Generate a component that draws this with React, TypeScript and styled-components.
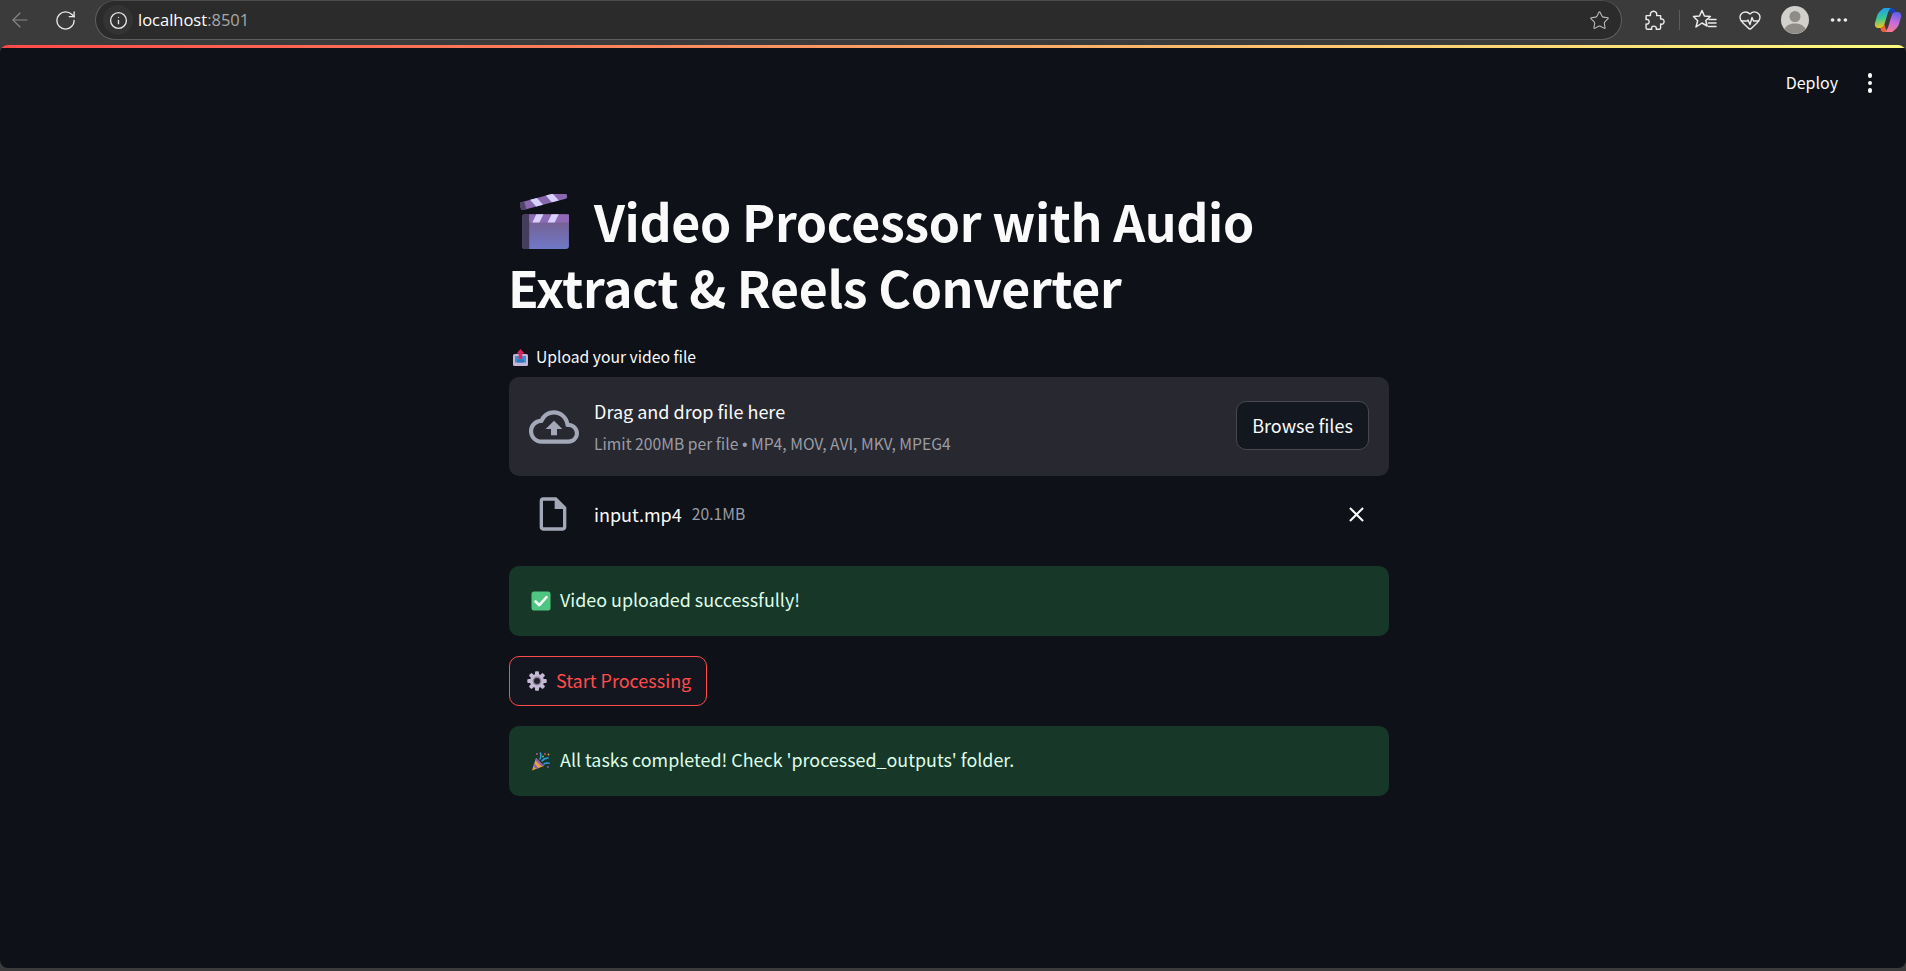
import React from "react";
import styled, { createGlobalStyle } from "styled-components";
import { ArrowLeft, RotateCw, Star, HeartPulse, Ellipsis, Info } from "lucide-react";
import { MdOutlineCloudUpload, MdOutlineInsertDriveFile, MdClose } from "react-icons/md";

const SANS = `"Noto Sans CJK SC", "Noto Sans", sans-serif`;

const GlobalStyle = createGlobalStyle`
  html, body {
    margin: 0;
    padding: 0;
    height: 100%;
    overflow: hidden;
    background: #3b3b3b;
  }
  * {
    box-sizing: border-box;
  }
`;

const Window = styled.div`
  height: 971px;
  display: flex;
  flex-direction: column;
  background: #3b3b3b;
`;

const Toolbar = styled.div`
  height: 45px;
  flex: none;
  display: flex;
  align-items: flex-start;
  color: #e8e8e8;
`;

const ToolSlot = styled.div<{ $w?: number; $dim?: boolean }>`
  width: ${({ $w }) => $w ?? 44}px;
  height: 40px;
  flex: none;
  display: flex;
  align-items: center;
  justify-content: center;
  color: ${({ $dim }) => ($dim ? "#8a8a8a" : "#ececec")};
`;

const CopilotSlot = styled(ToolSlot)`
  margin-left: 5px;
  padding-left: 4px;
`;

const AddressBar = styled.div`
  flex: 1;
  height: 40px;
  margin: 0 10px 0 5px;
  padding: 0 11px 0 7px;
  display: flex;
  align-items: center;
  background: #2b2b2b;
  border: 1.5px solid #5f5f5f;
  border-top-color: #4c4c4c;
  border-radius: 20px;
`;

const SiteInfo = styled.div`
  width: 30px;
  height: 30px;
  border-radius: 50%;
  background: #333333;
  display: flex;
  align-items: center;
  justify-content: center;
  color: #e6e6e6;
`;

const Url = styled.div`
  margin-left: 5px;
  padding-bottom: 2px;
  flex: 1;
  font: 400 16.5px "Open Sans", sans-serif;
  color: #ffffff;
`;

const UrlPort = styled.span`
  color: #a8a8a8;
`;

const ToolDivider = styled.div`
  width: 1px;
  height: 20px;
  margin: 10px 3px 0 3px;
  background: #5c5c5c;
  flex: none;
`;

const Page = styled.main`
  flex: 1;
  margin-bottom: 3px;
  background: #0e1117;
  border-radius: 8px;
  overflow: hidden;
  font-family: ${SANS};
  color: #fafafa;
`;

const Decoration = styled.div`
  height: 3px;
  background: linear-gradient(90deg, rgb(255, 75, 75), rgb(255, 253, 128));
`;

const AppHeader = styled.header`
  height: 70px;
  display: flex;
  align-items: center;
  justify-content: flex-end;
  gap: 26px;
  padding-right: 30px;
`;

const DeployText = styled.span`
  padding-bottom: 2px;
  font-size: 16px;
  line-height: 24px;
  color: #fafafa;
`;

const Kebab = styled.div`
  width: 12px;
  display: flex;
  flex-direction: column;
  align-items: center;
  gap: 3px;
`;

const KebabDot = styled.span`
  width: 4.5px;
  height: 4.5px;
  border-radius: 50%;
  background: #fafafa;
`;

const Column = styled.div`
  width: 880px;
  margin-left: 509px;
  padding-top: 69px;
`;

const Title = styled.h1`
  margin: 0 0 0 -1px;
  font-size: 50px;
  font-weight: 700;
  line-height: 66px;
  letter-spacing: -0.35px;
  color: #fafafa;
`;

const TitleEmoji = styled.svg`
  width: 49px;
  height: 55px;
  margin: 0 25px 0 12px;
  vertical-align: -7px;
`;

const FieldLabel = styled.label`
  margin-top: 26px;
  height: 24px;
  display: flex;
  align-items: center;
  gap: 7px;
  padding-left: 3px;
  font-size: 15.7px;
  line-height: 24px;
  color: #fafafa;
`;

const Dropzone = styled.section`
  margin-top: 8px;
  height: 99px;
  padding: 0 20px;
  display: flex;
  align-items: center;
  background: #282830;
  border-radius: 10px;
`;

const CloudIcon = styled.div`
  width: 50px;
  margin: 0 15px 0 0;
  display: flex;
  justify-content: center;
  color: #a3a8b8;
`;

const DropText = styled.div`
  flex: 1;
  display: flex;
  flex-direction: column;
  gap: 7px;
`;

const DropTitle = styled.div`
  font-size: 18px;
  line-height: 28px;
  color: #fafafa;
`;

const DropHint = styled.div`
  font-size: 15.7px;
  line-height: 24px;
  color: #9a9ca4;
`;

const HintBullet = styled.span`
  font-family: "Liberation Sans", sans-serif;
`;

const BrowseButton = styled.button`
  width: 133px;
  height: 49px;
  margin-bottom: 2px;
  padding-bottom: 3px;
  border-radius: 10px;
  border: 1px solid #474851;
  background: #13171f;
  color: #fafafa;
  font-family: ${SANS};
  font-size: 18px;
`;

const FileRow = styled.div`
  margin-top: 14px;
  height: 50px;
  padding: 0 20px 2px 19px;
  display: flex;
  align-items: center;
`;

const FileIcon = styled.div`
  width: 50px;
  margin-right: 16px;
  display: flex;
  justify-content: center;
  color: #a3a8b8;
`;

const FileName = styled.span`
  font-size: 18px;
  line-height: 28px;
  color: #fafafa;
`;

const FileSize = styled.span`
  margin-left: 10px;
  flex: 1;
  font-size: 15.7px;
  line-height: 28px;
  color: #9a9ca4;
`;

const RemoveIcon = styled.div`
  display: flex;
  color: #fafafa;
`;

const Alert = styled.div<{ $gap: number }>`
  margin-top: ${({ $gap }) => $gap}px;
  height: 70px;
  padding: 0 22px;
  display: flex;
  align-items: center;
  gap: 9px;
  background: #173828;
  border-radius: 10px;
  font-size: 17.9px;
  line-height: 28px;
  color: rgb(223, 253, 233);
`;

const AlertText = styled.span`
  margin-bottom: 4px;
`;

const StartButton = styled.button`
  margin-top: 20px;
  width: 198px;
  height: 50px;
  padding: 0 17px;
  display: flex;
  align-items: center;
  gap: 9px;
  border: 1px solid rgb(255, 75, 75);
  border-radius: 10px;
  background: #13161e;
  color: rgb(255, 75, 75);
  font-family: ${SANS};
  font-size: 18px;
  white-space: nowrap;
`;

const StartLabel = styled.span`
  margin-bottom: 3px;
`;

const EmojiIcon = styled.svg<{ $size: number }>`
  width: ${({ $size }) => $size}px;
  height: ${({ $size }) => $size}px;
  flex: none;
`;

const ClapperEmoji = () => (
  <TitleEmoji viewBox="0 0 48 54">
    <defs>
      <linearGradient id="clapBody" x1="0" y1="0" x2="0" y2="1">
        <stop offset="0" stopColor="#785c85" />
        <stop offset="1" stopColor="#6f78c8" />
      </linearGradient>
    </defs>
    <rect x="2" y="20" width="46" height="34" rx="3" fill="url(#clapBody)" />
    <path d="M5 20h4v34H5a3 3 0 0 1-3-3V23a3 3 0 0 1 3-3z" fill="#453d5c" />
    <rect x="9" y="20" width="39" height="8" fill="#8f6ab6" />
    <path d="M16 20h7l-4 8h-7zM31 20h7l-4 8h-7z" fill="#d8d0ff" />
    <g transform="rotate(-15 2 15)">
      <rect x="1" y="8" width="47" height="8" rx="2" fill="#8a68b0" />
      <path d="M1 10a2 2 0 0 1 2-2h3v8H3a2 2 0 0 1-2-2z" fill="#4f4468" />
      <path d="M12 8h7l4 8h-7zM28 8h7l4 8h-7z" fill="#d8d0ff" />
    </g>
  </TitleEmoji>
);

const OutboxEmoji = () => (
  <EmojiIcon $size={17} viewBox="0 0 17 17">
    <rect x="1" y="5" width="15" height="12" rx="1.5" fill="#c3b6d8" />
    <rect x="3" y="7" width="11" height="6.5" fill="#3f8fd0" />
    <path d="M5 10.5h7v3H5z" fill="#2f78b8" />
    <path d="M8.5 0l4 4.5H10.3V10H6.7V4.5H4.5z" fill="#e0245e" />
  </EmojiIcon>
);

const CheckEmoji = () => (
  <EmojiIcon $size={20} viewBox="0 0 20 20">
    <rect x="0.5" y="0.5" width="19" height="19" rx="2.5" fill="#4ec580" />
    <path d="M4.5 10.5l3.8 3.7 7.2-8" fill="none" stroke="#f4fff8" strokeWidth="2.6" strokeLinecap="round" strokeLinejoin="round" />
  </EmojiIcon>
);

const GearEmoji = () => (
  <EmojiIcon $size={20} viewBox="0 0 20 20">
    <g fill="#c4bad4">
      {[0, 45, 90, 135, 180, 225, 270, 315].map((a) => (
        <rect key={a} x="8" y="0.3" width="4" height="5" rx="1" transform={`rotate(${a} 10 10)`} />
      ))}
    </g>
    <circle cx="10" cy="10" r="7" fill="#c4bad4" />
    <circle cx="10" cy="10" r="4.4" fill="#8b8299" />
    <circle cx="10" cy="10" r="3" fill="#23222c" />
  </EmojiIcon>
);

const PartyEmoji = () => (
  <EmojiIcon $size={20} viewBox="0 0 20 20">
    <path d="M1 19.5L5 7l8 8z" fill="#e5a33a" />
    <path d="M3.2 12.6l4.3 4.4-2.2.9-3.2-3.2zM5.4 7.5l7 7-2 .8-5.7-5.7z" fill="#8d5cc4" />
    <path d="M9 8c1-2 1-4 .5-6M11 10c2-2.5 4-3 6-3M13 13c1.5-1 3-1.2 5-.8" fill="none" stroke="#2f9be0" strokeWidth="1.6" strokeLinecap="round" />
    <circle cx="6" cy="3" r="1" fill="#e0457a" />
    <circle cx="14" cy="3" r="1" fill="#e0457a" />
    <circle cx="17.5" cy="3.5" r="0.9" fill="#e5a33a" />
    <circle cx="12" cy="5.5" r="0.9" fill="#7bc96f" />
    <circle cx="17" cy="16" r="0.9" fill="#8d5cc4" />
  </EmojiIcon>
);

const ExtensionsIcon = () => (
  <svg width="22" height="22" viewBox="0 0 25 24" fill="none" stroke="currentColor" strokeWidth="1.6" strokeLinejoin="round">
    <path d="M4 7h4.500c-.8-2.800 1-5 3.500-5s4.300 2.200 3.500 5H20v4c2.500-.8 4 .8 4 2.800s-1.500 3.500-4 2.800V21a1.500 1.500 0 0 1-1.500 1.500H15c.8-2.400-.8-3.500-2.800-3.500S9.200 20.100 10 22.500H5A1.500 1.500 0 0 1 3.500 21v-4.500c2 .6 3.500-.6 3.500-2.500S5.500 10.900 3.500 11.500V7.500z" />
  </svg>
);

const FavoritesIcon = () => (
  <svg width="26" height="24" viewBox="0 0 26 24" fill="none" stroke="currentColor" strokeWidth="1.5" strokeLinejoin="round" strokeLinecap="round">
    <path d="M10 2.500l2.400 5.500 6 .5-4.600 4 1.300 5.500-5.100-3-6 4 1.700-6.300L1.500 8.500l6-.5z" />
    <path d="M17 11.500h7M16.500 15h7.500M16.500 18.500h7.500" />
  </svg>
);

const AvatarIcon = () => (
  <svg width="28" height="28" viewBox="0 0 28 28">
    <circle cx="14" cy="14" r="14" fill="#d2d0cb" />
    <circle cx="14" cy="10.500" r="5.500" fill="#8f8c87" />
    <path d="M3.500 23c2-4 6-5.500 10.500-5.500S22.500 19 24.500 23A14 14 0 0 1 3.500 23z" fill="#8f8c87" />
  </svg>
);

const CopilotIcon = () => (
  <svg width="28" height="26" viewBox="0 0 28 26">
    <defs>
      <linearGradient id="copLeft" x1="0.3" y1="0" x2="0.4" y2="1">
        <stop offset="0" stopColor="#1f9cf0" />
        <stop offset="0.5" stopColor="#35c99a" />
        <stop offset="1" stopColor="#f5c518" />
      </linearGradient>
      <linearGradient id="copRight" x1="0.7" y1="0" x2="0.4" y2="1">
        <stop offset="0" stopColor="#5b5fe8" />
        <stop offset="0.5" stopColor="#c66be0" />
        <stop offset="1" stopColor="#f77a8e" />
      </linearGradient>
    </defs>
    <path d="M8 2.500C8.700 1.500 10 1 11 1h7c-2 .5-3.500 3-4.500 6l-3 10c-.8 2.500-2 4-4 4H4C2 21 .5 19 .8 16.500L3 9c.8-3 3-5 5-6.500z" fill="url(#copLeft)" />
    <path d="M20 23.500c-.7 1-2 1.500-3 1.500h-7c2-.5 3.500-3 4.500-6l3-10c.8-2.500 2-4 4-4h2.500c2 0 3.500 2 3.200 4.500L25 17c-.8 3-3 5-5 6.500z" fill="url(#copRight)" />
    <path d="M6.500 21c2 0 3.500-1.500 4-4 .5 3 2 6 2 7-1 .8-2 1-3.500 1-1.500-.5-2.500-2.500-2.500-4z" fill="#f2603c" />
    <path d="M21.500 5c-2 0-3.500 1.500-4 4-.5-3-2-6-2-7 1-.8 2-1 3.500-1 1.500.5 2.500 2.500 2.500 4z" fill="#1c3fb8" />
  </svg>
);

const App: React.FC = () => (
  <Window>
    <GlobalStyle />
    <Toolbar>
      <ToolSlot $w={40} $dim>
        <ArrowLeft size={24} strokeWidth={1.1} />
      </ToolSlot>
      <ToolSlot $w={50}>
        <RotateCw size={23} strokeWidth={1.4} />
      </ToolSlot>
      <AddressBar>
        <SiteInfo>
          <Info size={19} strokeWidth={1.7} />
        </SiteInfo>
        <Url>
          localhost<UrlPort>:8501</UrlPort>
        </Url>
        <Star size={21} strokeWidth={1.2} color="#bdbdbd" />
      </AddressBar>
      <ToolSlot>
        <ExtensionsIcon />
      </ToolSlot>
      <ToolDivider />
      <ToolSlot>
        <FavoritesIcon />
      </ToolSlot>
      <ToolSlot $w={45}>
        <HeartPulse size={24} strokeWidth={1.4} />
      </ToolSlot>
      <ToolSlot $w={45}>
        <AvatarIcon />
      </ToolSlot>
      <ToolSlot $w={44}>
        <Ellipsis size={22} strokeWidth={2} />
      </ToolSlot>
      <CopilotSlot $w={40}>
        <CopilotIcon />
      </CopilotSlot>
    </Toolbar>
    <Page>
      <Decoration />
      <AppHeader>
        <DeployText>Deploy</DeployText>
        <Kebab>
          <KebabDot />
          <KebabDot />
          <KebabDot />
        </Kebab>
      </AppHeader>
      <Column>
        <Title>
          <ClapperEmoji />
          Video Processor with Audio
          <br />
          Extract &amp; Reels Converter
        </Title>
        <FieldLabel>
          <OutboxEmoji />
          Upload your video file
        </FieldLabel>
        <Dropzone>
          <CloudIcon>
            <MdOutlineCloudUpload size={50} />
          </CloudIcon>
          <DropText>
            <DropTitle>Drag and drop file here</DropTitle>
            <DropHint>
              Limit 200MB per file <HintBullet>•</HintBullet> MP4, MOV, AVI, MKV, MPEG4
            </DropHint>
          </DropText>
          <BrowseButton>Browse files</BrowseButton>
        </Dropzone>
        <FileRow>
          <FileIcon>
            <MdOutlineInsertDriveFile size={40} />
          </FileIcon>
          <FileName>input.mp4</FileName>
          <FileSize>20.1MB</FileSize>
          <RemoveIcon>
            <MdClose size={25} />
          </RemoveIcon>
        </FileRow>
        <Alert $gap={26}>
          <CheckEmoji />
          <AlertText>Video uploaded successfully!</AlertText>
        </Alert>
        <StartButton>
          <GearEmoji />
          <StartLabel>Start Processing</StartLabel>
        </StartButton>
        <Alert $gap={20}>
          <PartyEmoji />
          <AlertText>All tasks completed! Check 'processed_outputs' folder.</AlertText>
        </Alert>
      </Column>
    </Page>
  </Window>
);

export default App;
